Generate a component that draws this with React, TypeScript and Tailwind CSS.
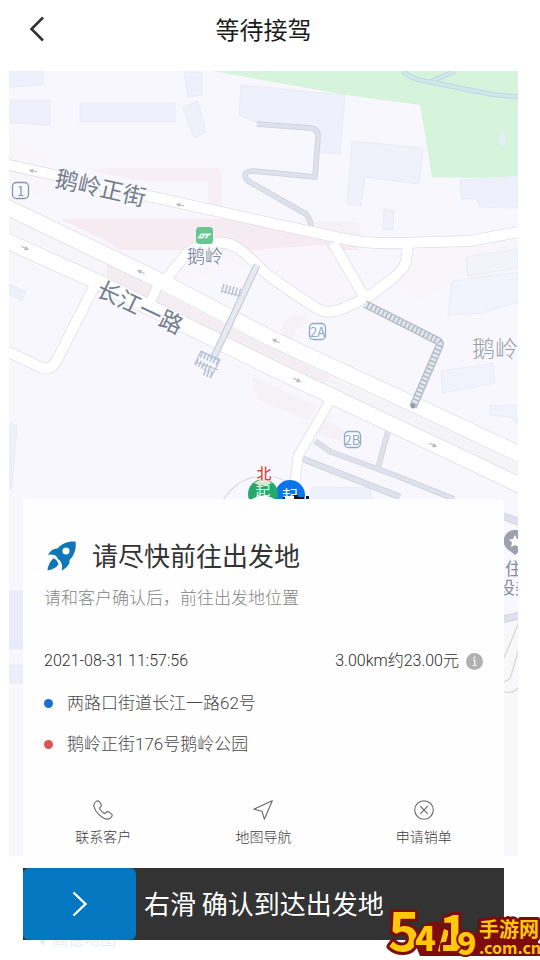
import { useState } from "react";

interface Road {
  d: string;
  width: number;
}

interface Building {
  points: string;
  fill?: string;
}

const ROADS: Road[] = [
  { d: "M0 163 L180 203 L270 223 L345 239 Q367 244 400 243 L470 241 L530 230", width: 10 },
  { d: "M0 204 L165 283 L270 338 L413 404 L530 459", width: 15 },
  { d: "M0 238 L100 283 L270 367 L433 444 L530 490", width: 15 },
  { d: "M0 348 L38 366 Q50 373 57 360 L94 287", width: 10 },
  { d: "M163 283 L186 254 Q203 240 225 243 Q238 245 256 264 Q266 276 318 309 Q328 315 344 308 L367 298 L388 282 Q403 271 406 262 L408 244", width: 10 },
  { d: "M333 243 L365 298", width: 10 },
  { d: "M149 305 L158 285", width: 9 },
  { d: "M330 401 L298 456 L293 500", width: 9 },
];

const LANES: Road[] = [
  { d: "M257 124 L310 128 Q319 129 318 138 L315 177 L253 171 Q240 172 248 181 L306 214 Q312 222 311 229", width: 4 },
  { d: "M315 441 L331 452 L397 476 L454 499", width: 4 },
  { d: "M388 431 L378 468", width: 4 },
  { d: "M303 459 L400 497", width: 5 },
  { d: "M500 515 L530 526", width: 6 },
  { d: "M500 620 L530 613", width: 6 },
];

const BUILDINGS: Building[] = [
  { points: "9,71 43,71 43,85 9,87" },
  { points: "9,100 50,100 50,125 9,123" },
  { points: "80,103 175,103 175,122 80,122" },
  { points: "184,72 202,72 202,95 188,97" },
  { points: "183,108 198,101 206,132 194,138" },
  { points: "241,85 345,95 340,154 317,152 319,132 310,128 257,123 239,115" },
  { points: "352,141 423,148 419,184 365,177 361,206 347,203", fill: "#eff1fb" },
  { points: "384,209 394,211 393,230 383,229" },
  { points: "460,180 518,177 518,208 480,207 477,199 462,199" },
  { points: "466,257 518,249 518,268 468,276", fill: "#f2f3fb" },
  { points: "452,281 518,272 518,302 482,313 448,315", fill: "#f1f3fd" },
  { points: "441,371 493,363 495,383 443,393", fill: "#f1f3fc" },
  { points: "490,406 515,405 518,425 511,417 490,415", fill: "#f1f3fc" },
  { points: "9,284 26,292 22,300 9,295" },
  { points: "9,423 17,425 12,488 9,490", fill: "#f0f0f8" },
  { points: "312,487 370,488 372,499 310,499" },
  { points: "9,591 23,591 23,649 9,649", fill: "#e9ebfb" },
  { points: "9,665 23,665 23,683 9,683", fill: "#eceefb" },
];

const ARROWS = [
  { x: 33, y: 171, angle: 193 },
  { x: 180, y: 205, angle: 193 },
  { x: 25, y: 248, angle: 25 },
  { x: 141, y: 272, angle: 205 },
  { x: 276, y: 341, angle: 205 },
  { x: 297, y: 380, angle: 25 },
  { x: 433, y: 445, angle: 25 },
];

const EXITS = [
  { x: 12, y: 182, label: "1", color: "#8896aa" },
  { x: 309, y: 323, label: "2A", color: "#8fa9c6" },
  { x: 344, y: 431, label: "2B", color: "#8fa9c6" },
];

function MapView() {
  return (
    <svg
      className="h-full w-full"
      viewBox="9 71 509 785"
      preserveAspectRatio="xMidYMin slice"
      fontFamily="'Noto Sans CJK SC', sans-serif"
      role="img"
      aria-label="地图"
    >
      <rect x="0" y="60" width="540" height="810" fill="#f7f7fd" />

      {/* parque */}
      <path d="M213 71 H518 V176 L480 178 L432 177 L420 105 L346 95 Z" fill="#d6f3dc" />
      <path d="M404 71 Q409 79 430 82 L490 94 L518 97 M430 82 L455 71" fill="none" stroke="#bcd9e2" strokeWidth="5" />
      <path d="M404 71 Q409 79 430 82 L490 94 L518 97 M430 82 L455 71" fill="none" stroke="#cfe8ec" strokeWidth="3" />
      <path d="M502 129 Q507 138 506 145 Q498 148 498 140 Z" fill="#dff1f6" />

      {/* áreas rosadas */}
      <path d="M9 135 L60 160 L9 160 Z M9 171 L58 184 L40 196 L9 190 Z" fill="#f9f6fb" />
      <path d="M92 171 Q105 167 120 168 H215 Q222 168 222 176 V212 L208 209 V181 H140 Z" fill="#f7eff5" />
      <path d="M60 219 H250 L345 241 L360 250 H120 L105 240 Z" fill="#f7ebf2" />
      <path d="M310 222 H358 Q361 224 360 236 L320 232 Z" fill="#f4f2f6" />
      <path d="M165 283 L190 256 L250 250 L325 245 L350 290 L340 306 L300 290 L256 264 Z" fill="#f8f6fc" />
      <path d="M9 217 L140 278 L158 290 L150 304 L105 276 L9 233 Z" fill="#f6f5f9" />
      <path d="M107 262 L152 285 L148 301 L107 280 Z" fill="#f3ecf1" />
      <path d="M160 291 L270 347 L330 376 L324 384 L270 359 L155 303 Z" fill="#f4eef3" />
      <path d="M330 376 L518 462 V476 L324 384 Z" fill="#f5f5f8" />
      <path d="M282 325 Q290 313 304 315 L309 322 L296 330 L290 345 L280 343 Z" fill="#f6f1f6" />
      <path d="M253 377 L318 406 L309 420 L270 405 Q250 398 253 377 Z" fill="#f6f1f6" />
      <path d="M323 418 L344 430 V442 L316 434 Z" fill="#f6f1f6" />
      <path d="M341 311 L367 303 L440 345 L411 402 L300 351 Z" fill="#f8f7fc" />
      <path d="M421 248 L518 240 V262 L470 270 L420 300 L392 285 Z" fill="#f9f6fb" />

      {BUILDINGS.map((b) => (
        <polygon key={b.points} points={b.points} fill={b.fill || "#eef1fc"} stroke="#e6e9f6" strokeWidth="0.8" />
      ))}

      {/* vias secundárias */}
      <g fill="none" strokeLinejoin="round">
        {LANES.map((lane) => (
          <path key={lane.d} d={lane.d} stroke="#cbd0dc" strokeWidth={lane.width + 1.5} />
        ))}
        {LANES.map((lane) => (
          <path key={lane.d} d={lane.d} stroke="#dee1eb" strokeWidth={lane.width} />
        ))}
      </g>

      {/* contornos primeiro, para os cruzamentos ficarem limpos */}
      <g fill="none" strokeLinejoin="round">
        {ROADS.map((road) => (
          <path key={road.d} d={road.d} stroke="#dfe0e6" strokeWidth={road.width + 1.6} />
        ))}
        {ROADS.map((road) => (
          <path key={road.d} d={road.d} stroke="#ffffff" strokeWidth={road.width} />
        ))}
      </g>

      {ARROWS.map((a) => (
        <g key={`${a.x}-${a.y}`} transform={`translate(${a.x} ${a.y}) rotate(${a.angle})`} fill="#b9bcc3">
          <rect x="-4" y="-0.6" width="5" height="1.2" />
          <path d="M0 -2.4 L4.5 0 L0 2.4 Z" />
        </g>
      ))}

      {/* passarela */}
      <g fill="none">
        <path d="M257 265 L213 359" stroke="#c3c8d4" strokeWidth="7" />
        <path d="M257 265 L213 359" stroke="#e7e9f0" strokeWidth="5" />
        <path d="M222 288 L240 293" stroke="#b9c2d3" strokeWidth="9" strokeDasharray="1.5 2" />
        <path d="M222 291 L241 296" stroke="#b9c2d3" strokeWidth="1" />
        <path d="M196 362 L212 370 M201 354 L219 362 M204 372 L212 375" stroke="#b3bfd4" strokeWidth="7" strokeDasharray="1.5 2" />
        <path d="M200 351 L220 360 L211 377 M196 362 L218 370 M201 351 L195 364" stroke="#b3bfd4" strokeWidth="1.2" />
      </g>

      {/* escadas */}
      <g fill="none">
        <path d="M365 304 L438 341 Q441 343 439 347 L413 407" stroke="#b5bbc6" strokeWidth="8" />
        <path d="M365 304 L438 341 Q441 343 439 347 L413 407" stroke="#e3e7ee" strokeWidth="5.5" strokeDasharray="2.6 1.6" />
        <circle cx="413" cy="406" r="2.5" fill="#969ca3" />
      </g>

      {/* nomes das ruas */}
      <g fill="#747d8c" fontSize="23" stroke="#f8f8fc" strokeWidth="3" paintOrder="stroke">
        <text transform="translate(54 186) rotate(12.7)">鹅岭正街</text>
        <text transform="translate(95 295) rotate(25.6)">长江一路</text>
        <text x="187" y="263" fontSize="18" fontWeight="300" fill="#6c7791">鹅岭</text>
        <text x="472" y="357" fontSize="23" fontWeight="300" fill="#989dab">鹅岭</text>
      </g>

      {EXITS.map((exit) => (
        <g key={exit.label}>
          <rect x={exit.x + 0.5} y={exit.y + 0.5} width="16" height="16" rx="4" fill="#f7faff" stroke={exit.color} strokeWidth="1.3" />
          <text x={exit.x + 8.5} y={exit.y + 13.5} fontSize="13" textAnchor="middle" fill={exit.color}>
            {exit.label}
          </text>
        </g>
      ))}

      {/* estação */}
      <rect x="196" y="227" width="17" height="17" rx="3.5" fill="#69c691" />
      <path d="M197.5 238.500 L200 234.500 Q200.500 233.500 202 233.500 H211.500 L210.500 235.200 H208.800 L206.800 238.500 H204.800 L206.500 235.200 H205 L203 238.500 Z M200.600 237 H202 L203.200 235.200 H201.600 Z" fill="#e9fbf0" fillRule="evenodd" />

      <circle cx="264" cy="522" r="46" fill="none" stroke="#d9dbe3" strokeWidth="1.2" />

      {/* marcadores */}
      <circle cx="290" cy="495" r="15" fill="#0a76ea" />
      <text x="290" y="502" fontSize="16" textAnchor="middle" fill="#ffffff">起</text>
      <circle cx="263" cy="494" r="15" fill="#25a86b" />
      <path d="M254 483 Q263 476 272 483 Q263 488 254 483 Z" fill="#d5e8c9" />
      <text x="263" y="497" fontSize="15" textAnchor="middle" fill="#e3fbee">起</text>
      <path d="M251 500 Q263 491 276 500 Z" fill="#ffffff" />
      <path d="M283 500 V497 H289 V499 H294 V495 H298 V497 H304 V500 Z M306 496 H309 V499 H306 Z" fill="#151a22" />
      <rect x="285" y="496" width="9" height="4" fill="#ffffff" />
      <text x="264" y="479" fontSize="15" fontWeight="500" textAnchor="middle" fill="#d94747" stroke="#ffffff" strokeWidth="2" paintOrder="stroke">北</text>

      {/* ponto de interesse à direita */}
      <path d="M515 530 a11 11 0 0 1 5 21 L515 555 L510 551 a11 11 0 0 1 5 -21 Z" fill="#9da1ad" />
      <path d="M515 535 L517 539 L521 539.500 L518 542.500 L519 547 L515 545 L511 547 L512 542.500 L509 539.500 L513 539 Z" fill="#ffffff" />
      <g fill="#858b9a" fontSize="17">
        <text x="505" y="575">住</text>
        <text x="498" y="594">设美</text>
      </g>
      <path d="M500 628 H518 V856 H500 Z" fill="#f8f8fb" />
      <path d="M519 622 L504 658 M519 648 L511 676 Q508 682 504 681 M504 692 Q515 694 519 686" fill="none" stroke="#d5d6dc" strokeWidth="1.200" />
    </svg>
  );
}

function RocketIcon() {
  return (
    <svg className="mt-1 size-[30px]" viewBox="0 0 30 30" fill="#0f76b8" aria-hidden="true">
      <path d="M28.500 0.600 C22 -0.200 15 2 10.500 7.600 C6.500 7.500 3.500 9.500 1 14 Q3.500 13 7.200 14 C9.500 15 10.500 16 10.800 18 C12.500 18.800 13.800 20.500 14.500 22.500 C15.500 25 15.200 27 14.500 29.500 C19.500 27 22.800 23.500 22.600 19 C27 14.500 29.600 8 28.500 0.600 Z" />
      <path d="M7 17.200 C3.500 19 1.200 24 0.400 29.400 C5 28.800 9.800 26.500 11.500 23 C10.800 20.800 9.300 18.500 7 17.200 Z" />
      <circle cx="19" cy="10" r="3.500" fill="#ffffff" />
    </svg>
  );
}

function PhoneIcon() {
  return (
    <svg className="size-5" viewBox="0 0 20 20" fill="none" stroke="#666666" strokeWidth="1.1" strokeLinejoin="round" aria-hidden="true">
      <path d="M3.200 1.400 C4.600 0.500 5.600 0.700 6.400 1.800 L8 4.300 C8.700 5.500 8.400 6.400 7.200 7.200 C6.400 7.800 6.500 8.500 7.200 9.500 C8.300 11 9.400 12.100 10.800 13 C11.700 13.600 12.300 13.600 12.800 12.900 C13.600 11.700 14.500 11.300 15.700 12 L18.200 13.600 C19.300 14.400 19.500 15.300 18.700 16.600 C17.500 18.700 15.600 19.700 12.700 18.900 C7.800 17.300 2.700 12.200 1.200 7.300 C0.400 4.600 1.300 2.600 3.200 1.400 Z" />
    </svg>
  );
}

function NavigateIcon() {
  return (
    <svg className="size-5" viewBox="0 0 20 20" fill="none" stroke="#666666" strokeWidth="1.1" strokeLinejoin="round" aria-hidden="true">
      <path d="M19.300 0.800 L0.800 9.200 L9 11.200 L11.300 19.200 Z" />
    </svg>
  );
}

function CancelIcon() {
  return (
    <svg className="size-5" viewBox="0 0 20 20" fill="none" stroke="#666666" strokeWidth="1.100" aria-hidden="true">
      <circle cx="10" cy="10" r="9.300" />
      <path d="M6.200 6.200 L13.800 13.800 M13.800 6.200 L6.200 13.800" />
    </svg>
  );
}

function SiteLogo() {
  return (
    <svg
      className="pointer-events-none absolute right-0 bottom-0 h-[56px] w-[154px]"
      viewBox="386 904 154 56"
      fill="#ffc80a"
      stroke="#7d0d0a"
      strokeWidth="6"
      strokeLinejoin="round"
      paintOrder="stroke"
      fontFamily="'Noto Sans CJK SC', sans-serif"
      fontWeight="900"
      role="img"
      aria-label="5419手游网.com.cn"
    >
      <path d="M412 936 L430 922 H440 L446 934 H538 V956 H420 Z" fill="#7d0d0a" stroke="none" />
      <path d="M444 929 L449 931 L443 953 L438 951 Z" />
      <text x="439" y="951" fontSize="50" fontWeight="700">1</text>
      <text x="388" y="951" fontSize="54" fontWeight="700">5</text>
      <text x="415" y="951" fontSize="34" strokeWidth="4">4</text>
      <text x="457" y="955" fontSize="32" strokeWidth="4">9</text>
      <text x="479" y="937" fontSize="20" fontWeight="700">手游网</text>
      <text x="479" y="954" fontSize="16" fontWeight="700" strokeWidth="4">.com.cn</text>
    </svg>
  );
}

const ACTIONS = [
  { label: "联系客户", icon: <PhoneIcon /> },
  { label: "地图导航", icon: <NavigateIcon /> },
  { label: "申请销单", icon: <CancelIcon /> },
];

const STOPS = [
  { address: "两路口街道长江一路62号", dot: "bg-[#1b6fd0]" },
  { address: "鹅岭正街176号鹅岭公园", dot: "bg-[#d9575b]" },
];

export default function App() {
  const [progress, setProgress] = useState(0);

  return (
    <main className="relative min-h-screen bg-white pb-5 font-['Noto_Sans_CJK_SC',sans-serif]">
      <header className="relative mr-[22px] mb-[13px] ml-[9px] flex h-[58px] items-center justify-center">
        <button type="button" aria-label="返回" className="absolute left-[18px] p-0.5">
          <svg className="h-[26px] w-4" viewBox="0 0 16 26" fill="none" stroke="#333333" strokeWidth="2.6" aria-hidden="true">
            <path d="M14 1.500 L2.500 13 L14 24.500" />
          </svg>
        </button>
        <h1 className="text-2xl text-[#1c1c1c]">等待接驾</h1>
      </header>

      <section className="relative">
        <div className="absolute top-0 right-[22px] bottom-[84px] left-[9px] overflow-hidden">
          <MapView />
        </div>
        <div className="absolute -bottom-2 left-8 flex items-center gap-1 text-base leading-5 text-[#e3ecf3]">
          <svg className="size-4" viewBox="0 0 16 16" fill="#d5f0f5" aria-hidden="true">
            <path d="M0 7 L16 0 L11 16 L7 10 Z" />
          </svg>
          <span>高德地图</span>
        </div>

        <div className="relative mr-9 ml-[23px] pt-[428px]">
          <div className="rounded-t bg-[#fefefe] pt-[35px] pb-[22px]">
            <div className="px-[21px]">
              <div className="flex h-10 items-center gap-[15px] pl-[3px]">
                <RocketIcon />
                <h2 className="text-[26px] text-[#333333]">请尽快前往出发地</h2>
              </div>
              <p className="mt-[11px] text-[17px] leading-6 font-light text-[#858585]">请和客户确认后，前往出发地位置</p>

              <div className="mt-10 flex items-center justify-between font-[Roboto,'Noto_Sans_CJK_SC',sans-serif] text-base leading-6 font-light text-[#2c2c2c]">
                <time dateTime="2021-08-31T11:57:56">2021-08-31 11:57:56</time>
                <div className="flex items-center gap-[7px]">
                  <span>3.00km约23.00元</span>
                  <button type="button" aria-label="费用说明">
                    <svg className="size-[17px]" viewBox="0 0 17 17" aria-hidden="true">
                      <circle cx="8.500" cy="8.500" r="8.500" fill="#b0b0b0" />
                      <path d="M7 7 H8.800 V12.500 M6.800 12.500 H10.600" fill="none" stroke="#ffffff" strokeWidth="1.200" />
                      <circle cx="8.500" cy="4.600" r="1" fill="#ffffff" />
                    </svg>
                  </button>
                </div>
              </div>

              <ul className="mt-[18px] flex flex-col gap-[17px]">
                {STOPS.map((stop) => (
                  <li key={stop.address} className="flex items-center gap-[14px] font-[Roboto,'Noto_Sans_CJK_SC',sans-serif] text-[17px] leading-6 font-light text-[#484848]">
                    <span className={`size-[9px] rounded-full ${stop.dot}`} />
                    {stop.address}
                  </li>
                ))}
              </ul>
            </div>

            <div className="mt-11 grid grid-cols-3">
              {ACTIONS.map((action) => (
                <button key={action.label} type="button" className="flex flex-col items-center gap-[6px] text-sm leading-5 font-light text-[#3c3c3c]">
                  {action.icon}
                  {action.label}
                </button>
              ))}
            </div>
          </div>

          {/* Deslizar para confirmar */}
          <label className="relative flex h-[72px] items-stretch bg-[#333333]">
            <span className="flex w-[113px] items-center justify-center rounded-md bg-[#0477c1]">
              <svg className="h-[26px] w-4" viewBox="0 0 16 26" fill="none" stroke="#ffffff" strokeWidth="2.400" aria-hidden="true">
                <path d="M1.500 1.500 L13.500 13 L1.500 24.500" />
              </svg>
            </span>
            <span className="flex items-center pb-1 pl-2 text-[26px] text-white">右滑 确认到达出发地</span>
            <input
              type="range"
              min={0}
              max={100}
              value={progress}
              onChange={(e) => setProgress(Number(e.target.value))}
              className="absolute inset-0 h-full w-full cursor-pointer opacity-0"
            />
          </label>
        </div>
      </section>

      <SiteLogo />
    </main>
  );
}
